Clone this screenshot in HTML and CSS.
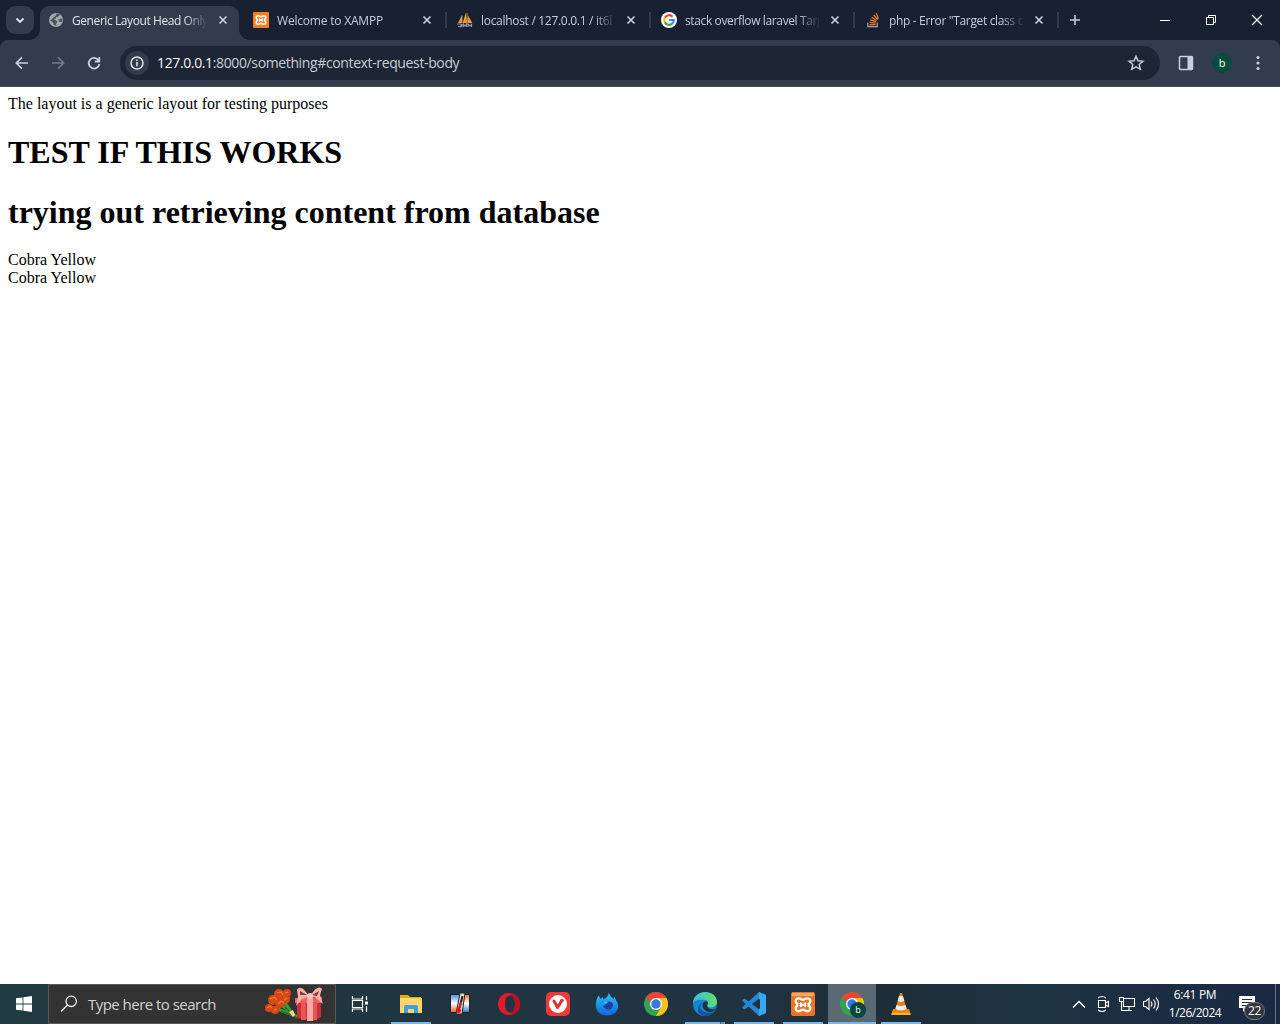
FILE: index.html
```html
<!DOCTYPE html>
<html lang="en">
<head>
<meta charset="utf-8">
<title>Generic Layout Head Only</title>
<link rel="stylesheet" href="styles.css">
</head>
<body>
<header class="browser">
  <div class="tabstrip">
    <div class="tab-search"><svg width="28" height="28" viewBox="0 0 28 28"><path d="M10.5 12.5l3.5 3.5 3.5-3.5" fill="none" stroke="#e0e6f0" stroke-width="1.8"/></svg></div>
    <div class="tab active">
      <svg class="fav" viewBox="0 0 16 16"><circle cx="8" cy="8" r="7" fill="#a4a9b0"/><path d="M9 1.500l3 1.200-1.700 1.800-2.300.8-.7 1.700-2 .3 2.700 1 1.500 1.700-1.300 1.500.2 2.200-2.400-.700-1-2.500L2 8.200l1.500-.700 1.800-2L7 4.500zM10.500 7.500l2.500-1 1.500 1.500-1 2.300-2.500-.8z" fill="#4b535f"/></svg>
      <span class="tab-title t1">Generic Layout Head Only</span>
      <svg class="close" viewBox="0 0 16 16"><path d="M4.500 4.500l7 7M11.500 4.500l-7 7"/></svg>
    </div>
    <div class="tab">
      <svg class="fav" viewBox="0 0 16 16"><rect width="16" height="16" rx="1" fill="#fb7a24"/><path d="M5.200 3.700C2.800 3.700 2.500 6.400 4.200 7.300v1.400C2.500 9.600 2.800 12.300 5.200 12.300 6.500 12.300 7 11.300 8 11.300s1.500 1 2.800 1c2.400 0 2.700-2.700 1-3.600V7.300c1.700-.9 1.400-3.600-1-3.600C9.500 3.700 9 4.700 8 4.700s-1.500-1-2.800-1zM6 6.700L7.400 8 6 9.300M10 6.700L8.600 8 10 9.300" fill="none" stroke="#fff" stroke-width="1.600"/></svg>
      <span class="tab-title t2">Welcome to XAMPP</span>
      <svg class="close" viewBox="0 0 16 16"><path d="M4.500 4.500l7 7M11.500 4.500l-7 7"/></svg>
    </div>
    <div class="tab">
      <svg class="fav" viewBox="0 0 16 16"><path d="M1 11L5 3v8zM5.500 11L9 .5l1.200 10.500zM11 11l.2-7.500 4 7.500z" fill="#f69a20"/><path d="M5 3.500V11M10 1l.8 10" stroke="#aaa" stroke-width=".7"/><path d="M0 12h4v3.500M5 12v3M6.500 15v-3l1.500 2 1.500-2v3M11 15v-3l2 2 1.500-1.500V15M1 14.500h3" fill="none" stroke="#908eb0" stroke-width="1.200"/></svg>
      <span class="tab-title t3">localhost / 127.0.0.1 / it6l</span>
      <svg class="close" viewBox="0 0 16 16"><path d="M4.500 4.500l7 7M11.500 4.500l-7 7"/></svg>
    </div>
    <div class="tab">
      <svg class="fav" viewBox="0 0 16 16"><circle cx="8" cy="8" r="8" fill="#fff"/><g fill="none" stroke-width="2.200"><path d="M3.900 5.600A4.800 4.800 0 0 1 11.500 4.700" stroke="#ea4435"/><path d="M3.900 5.600a4.800 4.800 0 0 0 0 4.800" stroke="#fbbc04"/><path d="M3.900 10.400a4.800 4.800 0 0 0 7.300 1.200" stroke="#34a853"/><path d="M11.200 11.600A4.800 4.800 0 0 0 12.800 8H8.200" stroke="#4285f4"/></g></svg>
      <span class="tab-title t4">stack overflow laravel Targ</span>
      <svg class="close" viewBox="0 0 16 16"><path d="M4.500 4.500l7 7M11.500 4.500l-7 7"/></svg>
    </div>
    <div class="tab">
      <svg class="fav" viewBox="0 0 16 16"><path d="M2.800 10.500v4.200h9.400v-4.200" fill="none" stroke="#a8adb5" stroke-width="1.200"/><path d="M4.500 12.600h6M4.600 10.300l6 .8M5.100 7.800l5.800 1.900M6.600 5.200l5 3.300M8.800 3l3.800 4.700M11.300 1.300l2 5.600" stroke="#ef7a1c" stroke-width="1.300"/></svg>
      <span class="tab-title t5">php - Error "Target class c</span>
      <svg class="close" viewBox="0 0 16 16"><path d="M4.500 4.500l7 7M11.500 4.500l-7 7"/></svg>
    </div>
    <div class="new-tab"><svg width="16" height="16" viewBox="0 0 16 16"><path d="M8 3v10M3 8h10" stroke="#c0cce2" stroke-width="1.600"/></svg></div>
    <div class="window-buttons">
      <svg viewBox="0 0 46 40"><path d="M18 20.500h10" stroke="#fff"/></svg>
      <svg viewBox="0 0 46 40"><path d="M18.500 17.500h7v7h-7zM20.500 17.500v-2h7v7h-2" fill="none" stroke="#fff"/></svg>
      <svg viewBox="0 0 46 40"><path d="M18 15l10 10M28 15l-10 10" stroke="#fff" stroke-width="1.100"/></svg>
    </div>
  </div>
  <div class="toolbar">
    <nav class="nav-buttons">
      <svg viewBox="0 0 36 36"><path d="M24 18H12.500M18 12.300L12.300 18l5.700 5.700" fill="none" stroke="#c3d0e8" stroke-width="1.700"/></svg>
      <svg viewBox="0 0 36 36"><path d="M12 18h11.500M18 12.300l5.700 5.700-5.700 5.700" fill="none" stroke="#707987" stroke-width="1.700"/></svg>
      <svg viewBox="0 0 36 36"><path d="M22.600 15.500a5.300 5.300 0 1 0 .7 3.500M23.300 12v4.500h-4.500" fill="none" stroke="#c3d0e8" stroke-width="1.800"/></svg>
    </nav>
    <div class="address">
      <span class="info"><svg width="24" height="24" viewBox="0 0 24 24"><circle cx="12" cy="12" r="6" fill="none" stroke="#e0e3e8" stroke-width="1.500"/><path d="M12 11v4.200M12 8.500v1.600" stroke="#e0e3e8" stroke-width="1.600"/></svg></span>
      <span class="url"><b>127.0.0.1</b>:8000/something#context-request-body</span>
      <svg class="star" viewBox="0 0 24 24"><path d="M12 5.300l2 4.500 4.900.5-3.700 3.200 1.100 4.800L12 15.800l-4.300 2.500 1.100-4.800-3.700-3.200 4.900-.5z" fill="none" stroke="#c8cace" stroke-width="1.500"/></svg>
    </div>
    <div class="toolbar-actions">
      <svg width="16" height="16" viewBox="0 0 16 16"><rect x="1.500" y="1.500" width="13" height="13" rx="1" fill="none" stroke="#c3d0e8" stroke-width="1.500"/><path d="M9.500 1h5v14h-5z" fill="#c3d0e8"/></svg>
      <span class="avatar">b</span>
      <svg width="16" height="16" viewBox="0 0 16 16"><g fill="#c3d0e8"><circle cx="8" cy="2.500" r="1.600"/><circle cx="8" cy="8" r="1.600"/><circle cx="8" cy="13.500" r="1.600"/></g></svg>
    </div>
  </div>
</header>

<main class="page">
  The layout is a generic layout for testing purposes
  <h1>TEST IF THIS WORKS</h1>
  <h1>trying out retrieving content from database</h1>
  Cobra Yellow<br>
  Cobra Yellow
</main>

<footer class="taskbar">
  <div class="start"><svg width="16" height="16" viewBox="0 0 16 16"><path d="M0 2.300L6.600 1.400v6.200H0zM7.400 1.200L16 0v7.600H7.400zM0 8.400h6.600v6.200L0 13.700zM7.400 8.400H16V16l-8.600-1.200z" fill="#fff"/></svg></div>
  <div class="search">
    <svg width="18" height="18" viewBox="0 0 18 18"><circle cx="11.200" cy="6.300" r="5.200" fill="none" stroke="#eee" stroke-width="1.300"/><path d="M7.500 10L1 16.500" stroke="#eee" stroke-width="1.300"/></svg>
    <span class="search-text">Type here to search</span>
    <svg class="gift" width="62" height="36" viewBox="0 0 62 36">
      <path d="M16 17l18 14M12 22l18 7M21 15l8 12" stroke="#3f9b2d" stroke-width="3"/><path d="M22 21l11 11M18 25l15 6" stroke="#257227" stroke-width="1.500"/>
      <g fill="#d94716"><circle cx="10" cy="14" r="5"/><circle cx="16" cy="8" r="5"/><circle cx="17" cy="17" r="5"/><circle cx="24" cy="7" r="4"/><circle cx="23" cy="13" r="4"/><circle cx="6" cy="22" r="4"/><circle cx="12" cy="24" r="4"/></g>
      <g fill="none" stroke="#f87936" stroke-width="1.200"><path d="M7 13l4-2 3 3M14 7l4-1 2 3M15 18l3-3 3 2M22 7l3-1M4 22l3-2 2 2M11 24l3-1M21 14l3-2"/></g>
      <path d="M26 26l4 5 2-2-2-5z" fill="#f3d49b"/>
      <path d="M34 15h24v16l-7 4-17-3z" fill="#c92f38"/><path d="M32 12l27-1v6H32z" fill="#ef6262"/><path d="M38 16h5v18h-5zM50 16h4v18h-4z" fill="#e85456"/><path d="M44 12h6v23h-6z" fill="#f7a8a2"/>
      <path d="M46 11C41 1 36 0 34 4l1 7-2 9 6-7zM47 11c4-8 9-12 12-8l-2 6 3 9-8-7z" fill="#f7b1a9"/><path d="M44 9l-7-4v4zM49 9l7-4-2 5z" fill="#793f41"/><circle cx="47" cy="10" r="3" fill="#ffc4ba"/>
    </svg>
  </div>
  <div class="task-view"><svg width="18" height="18" viewBox="0 0 18 18"><path d="M1.500 1v3h10V1M1.500 17v-3h10v3M1.500 5.500h10v7h-10zM15.500 1v4M15.500 11v6" fill="none" stroke="#fff" stroke-width="1.200"/><path d="M14 6.500h3v3h-3z" fill="#fff"/></svg></div>
  <div class="apps">
    <div class="app open"><svg viewBox="0 0 24 24"><path d="M1 3h8l2 2h11v4H1z" fill="#e2a514"/><path d="M1 6h22v15H1z" fill="#ffd567"/><path d="M5 21v-6q0-2 2-2h10q2 0 2 2v6h-4v-4H9v4z" fill="#3d9fe5"/></svg></div>
    <div class="app"><svg viewBox="0 0 24 24"><defs><linearGradient id="heat" x2="0" y2="1"><stop stop-color="#4d96ee"/><stop offset=".5" stop-color="#fff"/><stop offset="1" stop-color="#ed692f"/></linearGradient><linearGradient id="cold" x2="0" y2="1"><stop stop-color="#ed7b36"/><stop offset=".5" stop-color="#fff"/><stop offset="1" stop-color="#367cd1"/></linearGradient></defs><rect x="2" y="2" width="20" height="19" rx="2" fill="#222"/><path d="M3 3h9v17H3z" fill="url(#heat)"/><path d="M12 3h9v17h-9z" fill="url(#cold)"/><path d="M12 1h5l-3 21H8z" fill="#d9dccf" stroke="#222"/><path d="M14.500 4l-3 12" stroke="#222" stroke-width="2"/><path d="M13 10l-2 7" stroke="#e11d20" stroke-width="2"/><circle cx="10.500" cy="18.500" r="2.500" fill="#dc1926"/></svg></div>
    <div class="app"><svg viewBox="0 0 24 24"><path fill-rule="evenodd" d="M12 1C5.500 1 1 5.800 1 12s4.500 11 11 11 11-4.800 11-11S18.500 1 12 1zm1 2.500c3.600 0 5 4 5 8.500s-1.400 8.500-5 8.500S8 16.500 8 12s1.400-8.500 5-8.500z" fill="#e51b2d"/><path d="M14 1.200c10 1.500 12 17 3.500 20.500-1.500.7-3 .8-4.500-.9C19.500 20 19.500 4 13 3.200z" fill="#b51223"/></svg></div>
    <div class="app"><svg viewBox="0 0 24 24"><rect width="24" height="24" rx="5" fill="#ef3939"/><circle cx="12" cy="12" r="9" fill="#fff"/><path d="M8 9l3.600 6.500L15.500 9" fill="none" stroke="#e23135" stroke-width="3" stroke-linecap="round" stroke-linejoin="round"/><circle cx="16" cy="8.500" r="1.800" fill="#e23135"/></svg></div>
    <div class="app"><svg viewBox="0 0 24 24"><defs><linearGradient id="fox" x2="0" y2="1"><stop stop-color="#26c8f5"/><stop offset="1" stop-color="#1264dc"/></linearGradient></defs><path d="M3.500 3.500L6 7l1.500-2 1 2.500L12 5l2-4 1.500 3 3 3 1-2.500 1.500 4c5 6 1 15-9 15C1 23.500-2 13 3.500 3.500z" fill="url(#fox)"/><path d="M7 10c2-1 3-1 5 0 4-2 8 2 5 6-3 3-8 1-9-2l3-1z" fill="#263b9b"/><path d="M9 9l4 1-2 2-3-1z" fill="#36c7fa"/></svg></div>
    <div class="app"><svg viewBox="0 0 24 24"><circle cx="12" cy="12" r="12" fill="#32a350"/><path d="M12 6h10.400A12 12 0 0 1 12 24l5.200-9z" fill="#fbc116"/><path d="M1.600 6A12 12 0 0 1 22.400 6H12a6 6 0 0 0-5.200 3z" fill="#ea4435"/><circle cx="12" cy="12" r="6" fill="#fff"/><circle cx="12" cy="12" r="4.700" fill="#3478e5"/></svg></div>
    <div class="app open split"><svg viewBox="0 0 24 24"><defs><linearGradient id="edge"><stop stop-color="#31bce8"/><stop offset="1" stop-color="#66df64"/></linearGradient></defs><circle cx="12" cy="12" r="12" fill="#1487cf"/><path d="M0 11C1-4 24-3 24 10c0 5-7 7-10 4 2-3 1-6-2-6-4-1-10-1-12 3z" fill="url(#edge)"/><path d="M9 10c-5 7 1 13 12 10-5 7-17 4-16-3 0-3 2-5 4-7z" fill="#1352a3"/><path d="M14 13c0 4 6 6 10 3l-3 3c-7 3-13-2-11-8 3-4 7 0 4 2z" fill="#203341"/></svg></div>
    <div class="app open"><svg viewBox="0 0 24 24"><path d="M17 0l7 3v18l-7 3L0 8.500l2.500-2L18 18V6L2.500 17.500 0 15.500z" fill="#2289d4"/><path d="M17 0l7 3v18l-7 3z" fill="#35a8ee"/><path d="M18 7l-6.500 5 6.500 5z" fill="#203341"/></svg></div>
    <div class="app open"><svg viewBox="0 0 24 24"><rect width="24" height="24" rx="2" fill="#ec7324"/><path d="M1 1h22v3H1z" fill="#f9a568"/><path transform="translate(0 .7) scale(1.500)" d="M5.200 3.700C2.800 3.700 2.500 6.400 4.200 7.300v1.400C2.500 9.600 2.800 12.300 5.200 12.300 6.500 12.300 7 11.300 8 11.300s1.500 1 2.800 1c2.400 0 2.700-2.700 1-3.600V7.300c1.700-.9 1.400-3.600-1-3.600C9.500 3.700 9 4.700 8 4.700s-1.500-1-2.800-1zM6 6.700L7.400 8 6 9.300M10 6.700L8.600 8 10 9.300" fill="none" stroke="#fff" stroke-width="1.500"/></svg></div>
    <div class="app open current"><svg viewBox="0 0 24 24"><circle cx="12" cy="12" r="12" fill="#32a350"/><path d="M12 6h10.400A12 12 0 0 1 12 24l5.200-9z" fill="#fbc116"/><path d="M1.600 6A12 12 0 0 1 22.400 6H12a6 6 0 0 0-5.200 3z" fill="#ea4435"/><circle cx="12" cy="12" r="6" fill="#fff"/><circle cx="12" cy="12" r="4.700" fill="#3478e5"/></svg><span class="profile">b</span></div>
    <div class="app open"><svg viewBox="0 0 24 24"><path d="M4 17h16l2 6H2z" fill="#f58a0b"/><path d="M11 1h2l5 17q-6 5-12 0z" fill="#f37b12"/><path d="M10 4h4l1.300 5q-3.300 2-6.600 0zM7.500 13q4.500 2 9 0l1 4q-5.500 3-11 0z" fill="#e8edef"/><path d="M3 22h18" stroke="#ffc02d" stroke-width="1.500"/></svg></div>
  </div>
  <div class="tray">
    <svg viewBox="0 0 24 24"><path d="M6 15.500L12 9.500l6 6" fill="none" stroke="#fff" stroke-width="1.300"/></svg>
    <svg viewBox="0 0 24 24"><path d="M7.500 8.500h7v7h-7zM14.500 11l3-1.500v5l-3-1.500M7 6q4-3 8 0M7 18q4 3 8 0" fill="none" stroke="#fff" stroke-width="1.100"/></svg>
    <svg viewBox="0 0 24 24"><path d="M9 6.500h10.500v8H8.500V10M14 14.500v4M9 18.500h8M4.500 5.500h4v4h-4zM6.500 9.500v9h4" fill="none" stroke="#fff" stroke-width="1.100"/></svg>
    <svg viewBox="0 0 24 24"><path d="M4.500 9.500h2l3.500-3v11l-3.500-3h-2zM12 9.500q2 2.500 0 5M14.500 7.500q3.500 4.500 0 9M17 5.500q5 6.500 0 13" fill="none" stroke="#fff" stroke-width="1.100"/></svg>
  </div>
  <div class="clock"><span class="time">6:41 PM</span><span>1/26/2024</span></div>
  <div class="notifications"><svg width="16" height="16" viewBox="0 0 16 16"><path d="M0 0h16v12H7l-3 4v-4H0z" fill="#fff"/><path d="M3 3.500h10M3 6.500h10M3 9.500h5" stroke="#1d2f43"/></svg><span class="count">22</span></div>
</footer>
</body>
</html>
```
FILE: styles.css
```css
* { box-sizing: border-box; }
body { margin: 0; height: 1024px; display: flex; flex-direction: column; overflow: hidden; background: #fff; color: #000; font: 16px "Liberation Serif", serif; }
svg { display: block; flex: none; }

.browser { font-family: "Open Sans", sans-serif; background: #182131; flex: none; }
.tabstrip { height: 40px; display: flex; padding-left: 6px; }
.tab-search { width: 28px; height: 28px; margin: 6px 6px 0 0; border-radius: 9px; background: #333c4c; }
.tab { position: relative; width: 204px; height: 34px; margin-top: 6px; padding: 0 9px 6px; display: flex; align-items: center; gap: 8px; }
.tab:not(.active)::after { content: ""; position: absolute; right: 1px; top: 6px; width: 2px; height: 16px; background: #333c4c; }
.tab.active { width: 199px; margin-right: 5px; padding: 0 8px 6px; border-radius: 9px 9px 0 0; background: #333c4c; }
.tab.active::before, .tab.active::after { content: ""; position: absolute; bottom: 0; width: 10px; height: 10px; }
.tab.active::before { left: -10px; background: radial-gradient(circle at 0 0, transparent 9.5px, #333c4c 10px); }
.tab.active::after { right: -10px; background: radial-gradient(circle at 100% 0, transparent 9.5px, #333c4c 10px); }
.fav { width: 16px; height: 16px; }
.tab-title { width: 134px; padding-top: 2px; white-space: nowrap; font-size: 12px; line-height: 18px; color: #c0cce2; mask-image: linear-gradient(90deg, #000 112px, transparent 136px); }
.active .tab-title { width: 135px; color: #e0e4eb; }
.close { width: 16px; height: 16px; stroke: #c8d2e3; stroke-width: 1.6; }
.t1 { letter-spacing: -.42px; }
.t2 { letter-spacing: -.2px; }
.t3 { letter-spacing: -.3px; }
.t4 { letter-spacing: -.37px; }
.t5 { letter-spacing: -.34px; }
.new-tab { width: 30px; padding: 12px 0 0 7px; }
.window-buttons { display: flex; margin-left: auto; }
.window-buttons svg { width: 46px; height: 40px; }

.toolbar { height: 47px; display: flex; align-items: center; padding: 0 14px 1px 4px; background: #333c4c; border-bottom: 1px solid #484b54; border-radius: 8px 8px 0 0; }
.nav-buttons { display: flex; width: 116px; }
.nav-buttons svg { width: 36px; height: 36px; }
.address { width: 1040px; height: 34px; padding: 0 12px 0 5px; border-radius: 17px; display: flex; align-items: center; background: #1e2636; }
.info { width: 24px; height: 24px; border-radius: 50%; background: #333c4c; }
.url { flex: 1; margin-left: 8px; font-size: 14px; letter-spacing: -.37px; color: #c9cdd3; white-space: nowrap; }
.url b { font-weight: 400; color: #f4f5f7; }
.star { width: 24px; height: 24px; }
.toolbar-actions { display: flex; align-items: center; flex: 1; justify-content: space-between; padding-left: 18px; }
.avatar { width: 20px; height: 20px; border-radius: 50%; background: #014d40; color: #fff; font-size: 11px; line-height: 19px; text-align: center; }

.page { flex: 1; padding: 8px; line-height: 18px; }
.page h1 { font-size: 32px; line-height: 37px; margin: 21.44px 0; }
.page h1 + h1 { margin: 23px 0 19.4px; }

.taskbar { flex: none; height: 40px; display: flex; font-family: "Open Sans", sans-serif; color: #fff; background: linear-gradient(90deg, #203a42, #203641 30%, #203341 58%, #1e2e39 70%, #1d3340 80%, #1d2f43 87%, #1b2944); }
.start, .task-view { width: 48px; display: flex; align-items: center; justify-content: center; }
.search { width: 288px; display: flex; align-items: center; padding: 0 10px 0 11px; background: #333; border: 1px solid #5b5b5b; }
.search-text { flex: 1; margin-left: 10px; font-size: 15px; letter-spacing: -.53px; color: #d2d2d2; white-space: nowrap; }
.apps { display: flex; gap: 1px; margin-left: 3px; }
.app { position: relative; width: 48px; display: flex; align-items: center; justify-content: center; }
.app > svg { width: 24px; height: 24px; }
.app.open::after { content: ""; position: absolute; left: 4px; right: 4px; bottom: 0; height: 2px; background: #76b9ed; }
.app.split::after { background: linear-gradient(90deg, #76b9ed 35px, #3a6484 35px, #3a6484 36px, #5c98c5 36px); }
.app.current { background: #5b6972; }
.app.current::after { left: 0; right: 0; }
.profile { position: absolute; left: 22px; top: 18px; width: 16px; height: 16px; border-radius: 50%; background: #05483d; font-size: 9px; line-height: 15px; text-align: center; }
.tray { display: flex; align-items: center; margin-left: auto; }
.tray svg { width: 24px; height: 24px; }
.clock { width: 64px; display: flex; flex-direction: column; align-items: center; font-size: 12px; line-height: 18px; padding-top: 2px; letter-spacing: -.5px; }
.time { letter-spacing: -.35px; }
.notifications { position: relative; width: 53px; padding: 12px 0 0 12px; }
.notifications::after { content: ""; position: absolute; top: 0; right: 4px; width: 1px; height: 40px; background: #657180; }
.count { position: absolute; left: 17px; top: 18px; width: 21px; height: 18px; border-radius: 9px; border: 1px solid #737a80; background: #30373d; font-size: 12px; line-height: 16px; text-align: center; letter-spacing: -.3px; }
```
